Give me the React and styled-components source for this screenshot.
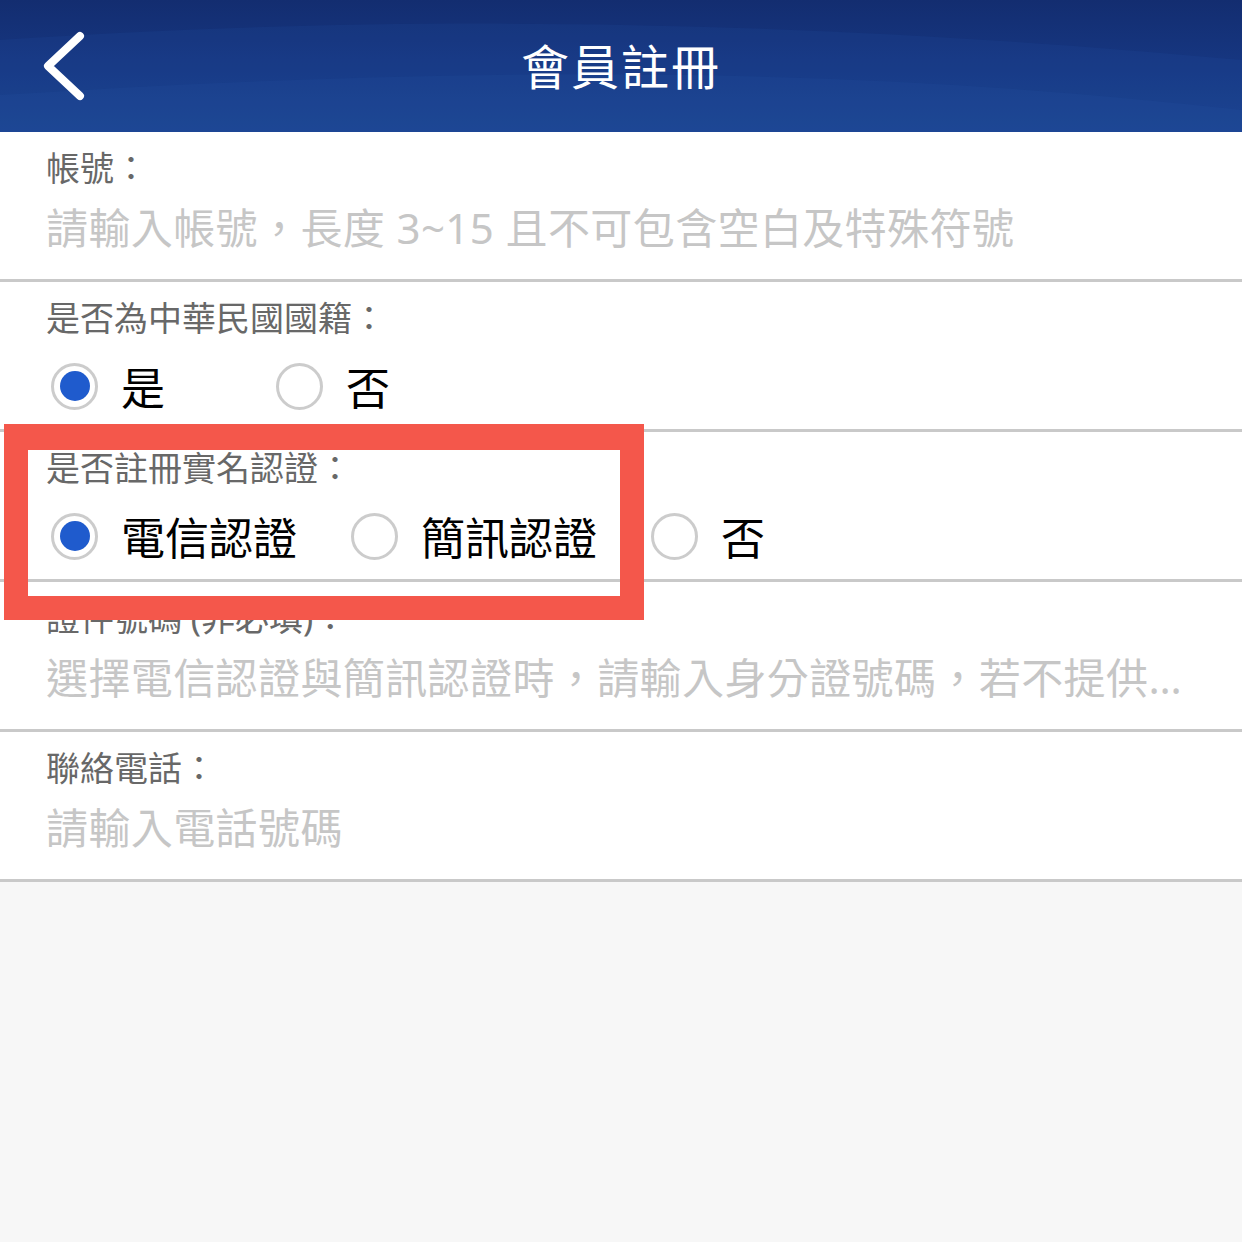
import React from "react";
import styled, { createGlobalStyle } from "styled-components";

const GlobalStyle = createGlobalStyle`
  html, body {
    margin: 0;
    padding: 0;
    background: #f7f7f7;
  }
  body {
    font-family: "Noto Sans", "Noto Sans CJK TC", sans-serif;
  }
`;

const Page = styled.div`
  position: relative;
  width: 1242px;
  height: 1242px;
  background: #f7f7f7;
  overflow: hidden;
`;

const Header = styled.div`
  position: relative;
  height: 132px;
  display: flex;
  align-items: center;
  justify-content: center;
  background: linear-gradient(180deg, #132d70 0%, #163680 45%, #1b438f 100%);
  overflow: hidden;
`;

const Waves = styled.svg`
  position: absolute;
  inset: 0;
  width: 100%;
  height: 100%;
`;

const BackButton = styled.button`
  position: absolute;
  left: 36px;
  top: 26px;
  width: 56px;
  height: 80px;
  padding: 0;
  border: none;
  background: none;
`;

const Title = styled.h1`
  position: relative;
  margin: 0;
  padding-bottom: 4px;
  color: #fff;
  font-size: 48px;
  font-weight: 400;
  letter-spacing: 2px;
`;

const Form = styled.div`
  background: #fff;
`;

const Row = styled.div`
  box-sizing: border-box;
  height: 150px;
  padding: 16px 40px 0 46px;
  border-bottom: 3px solid #c9c9c9;
  overflow: hidden;
`;

const Label = styled.div`
  font-size: 34px;
  line-height: 40px;
  color: #686868;
`;

const Placeholder = styled.div`
  margin-top: 10px;
  font-size: 42px;
  line-height: 60px;
  letter-spacing: 0.4px;
  color: #c6c6c6;
  white-space: nowrap;
  overflow: hidden;
  text-overflow: ellipsis;
`;

const RadioGroup = styled.div`
  display: flex;
  align-items: center;
  height: 68px;
  margin-top: 14px;
  margin-left: 5px;
`;

const Option = styled.label`
  display: flex;
  align-items: center;
  gap: 23px;
  width: ${(p) => p.$width}px;
  flex: none;
  font-size: 44px;
  color: #000;
`;

const Circle = styled.span`
  box-sizing: border-box;
  width: 47px;
  height: 47px;
  border-radius: 50%;
  border: 3px solid #cccccc;
  display: flex;
  align-items: center;
  justify-content: center;
  flex: none;

  &::after {
    content: "";
    width: 30px;
    height: 30px;
    border-radius: 50%;
    background: ${(p) => (p.$checked ? "#1f5bcd" : "transparent")};
  }
`;

const Highlight = styled.div`
  position: absolute;
  left: 4px;
  top: 424px;
  width: 640px;
  height: 196px;
  box-sizing: border-box;
  border: 24px solid #f4574b;
  border-top-width: 26px;
  pointer-events: none;
`;

function Radios({ options, checked, width }) {
  return (
    <RadioGroup>
      {options.map((o) => (
        <Option key={o} $width={width}>
          <Circle $checked={o === checked} />
          {o}
        </Option>
      ))}
    </RadioGroup>
  );
}

export default function App() {
  return (
    <Page>
      <GlobalStyle />
      <Header>
        <Waves viewBox="0 0 1242 132" preserveAspectRatio="none">
          <path d="M0 40 C 300 20, 700 10, 1242 60 L1242 132 L0 132 Z" fill="#2350a0" opacity="0.18" />
          <path d="M0 95 C 400 70, 800 60, 1242 110 L1242 132 L0 132 Z" fill="#2a5aaa" opacity="0.15" />
        </Waves>
        <BackButton aria-label="返回">
          <svg width="56" height="80" viewBox="0 0 56 80">
            <path d="M44 10 L12 40 L44 70" fill="none" stroke="#fff" strokeWidth="8" strokeLinecap="round" strokeLinejoin="round" />
          </svg>
        </BackButton>
        <Title>會員註冊</Title>
      </Header>
      <Form>
        <Row>
          <Label>帳號：</Label>
          <Placeholder>請輸入帳號，長度 3~15 且不可包含空白及特殊符號</Placeholder>
        </Row>
        <Row>
          <Label>是否為中華民國國籍：</Label>
          <Radios options={["是", "否"]} checked="是" width={225} />
        </Row>
        <Row>
          <Label>是否註冊實名認證：</Label>
          <Radios options={["電信認證", "簡訊認證", "否"]} checked="電信認證" width={300} />
        </Row>
        <Row>
          <Label>證件號碼 (非必填)：</Label>
          <Placeholder>選擇電信認證與簡訊認證時，請輸入身分證號碼，若不提供將無法完成實名認證</Placeholder>
        </Row>
        <Row>
          <Label>聯絡電話：</Label>
          <Placeholder>請輸入電話號碼</Placeholder>
        </Row>
      </Form>
      <Highlight />
    </Page>
  );
}
